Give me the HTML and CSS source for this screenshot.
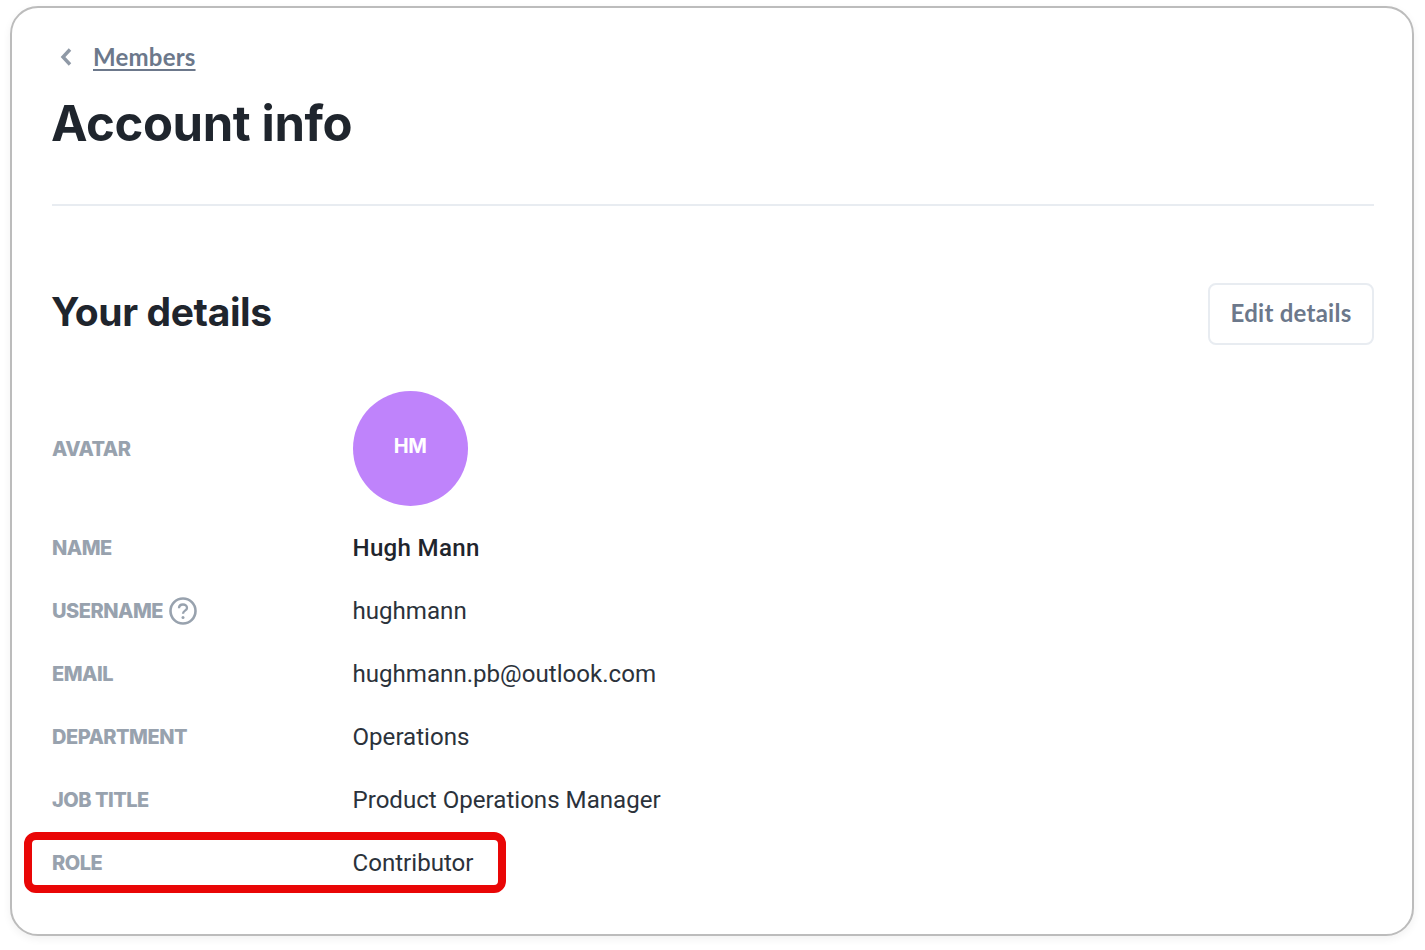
FILE: index.html
```html
<!DOCTYPE html>
<html lang="en">
<head>
<meta charset="utf-8">
<title>Account info</title>
<link rel="stylesheet" href="styles.css">
</head>
<body>
<main class="card">
  <nav class="crumb">
    <svg class="chev" width="14" height="20" viewBox="0 0 14 20" fill="none"><path d="M11 2.500 4 10l7 7.500" stroke="#8f99a6" stroke-width="3.400"/></svg>
    <a class="crumb-link" href="#">Members</a>
  </nav>
  <h1 class="title">Account info</h1>
  <hr class="rule">
  <header class="section-head">
    <h2 class="section-title">Your details</h2>
    <button class="edit" type="button">Edit details</button>
  </header>
  <dl class="rows">
    <div class="row row-avatar"><dt class="label">AVATAR</dt><dd class="value"><span class="avatar">HM</span></dd></div>
    <div class="row row-name"><dt class="label">NAME</dt><dd class="value strong">Hugh Mann</dd></div>
    <div class="row"><dt class="label">USERNAME
      <svg class="help" width="28" height="28" viewBox="0 0 28 28" fill="none"><circle cx="14" cy="14" r="12.500" stroke="#98a2ae" stroke-width="2.600"/><path d="M10 11.300c0-2.400 1.800-3.800 4-3.800s4 1.400 4 3.400c0 2.800-4 2.800-4 5.800" stroke="#98a2ae" stroke-width="2.300"/><circle cx="14" cy="20.500" r="1.500" fill="#98a2ae"/></svg></dt><dd class="value">hughmann</dd></div>
    <div class="row"><dt class="label">EMAIL</dt><dd class="value">hughmann.pb@outlook.com</dd></div>
    <div class="row"><dt class="label">DEPARTMENT</dt><dd class="value">Operations</dd></div>
    <div class="row"><dt class="label">JOB TITLE</dt><dd class="value">Product Operations Manager</dd></div>
    <div class="row row-role"><dt class="label">ROLE</dt><dd class="value">Contributor</dd><span class="highlight"></span></div>
  </dl>
</main>
</body>
</html>
```
FILE: styles.css
```css
* { box-sizing: border-box; }
html, body { margin: 0; height: 100%; background: #fff; }
body {
  padding: 6px 11px 14px 10px;
  font-family: "Open Sans", "Liberation Sans", sans-serif;
  color: #212831;
}
.card {
  height: 930px;
  border: 2px solid #bcbcbc;
  border-radius: 28px;
  padding: 34px 38px 0 40px;
  box-shadow: 0 3px 8px rgba(0, 0, 0, .06);
  background: #fff;
}
.crumb { display: flex; align-items: center; height: 30px; padding-left: 7px; gap: 20px; }
.crumb-link { font: 700 24px/30px Lato, sans-serif; letter-spacing: .2px; color: #6c788b; text-decoration: underline; text-underline-offset: 3px; }
.title { margin: 21px 0 0 -1px; font: 700 49px/62px Inter, sans-serif; letter-spacing: -.4px; color: #1f252d; }
.rule { margin: 49px 0 0; border: 0; border-top: 2px solid #e8ecf1; }
.section-head { display: flex; justify-content: space-between; align-items: center; margin-top: 77px; height: 62px; }
.section-title { margin: 0 0 4px -1px; font: 700 39px/50px Inter, sans-serif; letter-spacing: -.4px; color: #1f252d; }
.edit { width: 166px; height: 62px; background: #fff; border: 2px solid #e8ecf1; border-radius: 8px; font: 700 24px/30px Lato, sans-serif; letter-spacing: .25px; color: #6c788b; padding: 0 0 2px; }
.rows { margin: 46px 0 0; }
.row { position: relative; display: flex; align-items: center; height: 63px; }
.row-avatar { height: 115px; margin-bottom: 10px; }
.row-name { height: 63px; }
.label { width: 300.500px; display: flex; align-items: center; gap: 6px; font: 800 20px/26px Inter, sans-serif; letter-spacing: -.5px; color: #98a2ae; }
.value { margin: 0; font: 400 24.100px/32px Roboto, sans-serif; color: #2b323b; }
.strong { font-weight: 500; letter-spacing: .3px; color: #1f252d; }
.avatar { display: flex; align-items: center; justify-content: center; width: 115px; height: 115px; border-radius: 50%; background: #bf83fb; color: #fff; font: 700 20px/26px Inter, sans-serif; letter-spacing: -.5px; padding-bottom: 5px; }
.highlight { position: absolute; left: -28px; top: 1px; width: 482px; height: 61px; border: 8px solid #e90606; border-radius: 12px; }
```
